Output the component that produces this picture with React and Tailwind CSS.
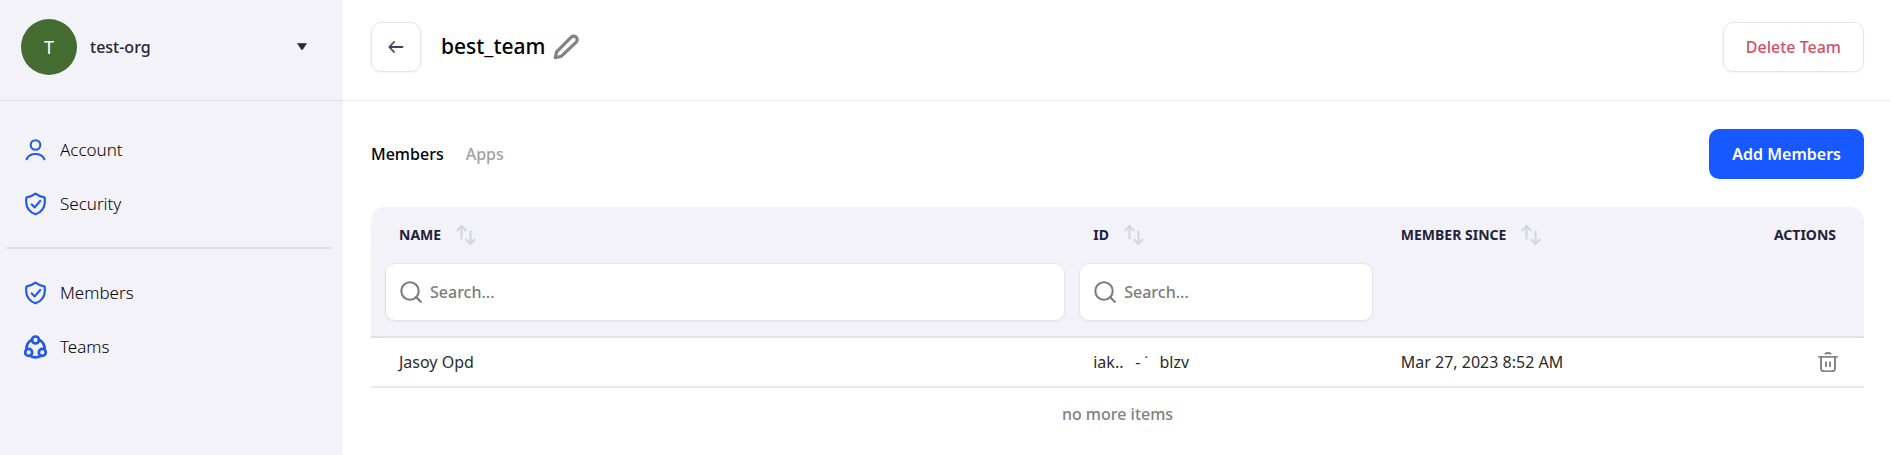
const font = "font-['Noto_Sans','Open_Sans',sans-serif]";

function AccountIcon() {
  return (
    <svg width="24" height="24" viewBox="0 0 24 24" fill="none" stroke="currentColor" strokeWidth="2.100" strokeLinecap="round" aria-hidden="true">
      <circle cx="11.500" cy="7" r="4.800" />
      <path d="M2.600 21.200c1.600-3.600 5-5.200 8.900-5.200s7.300 1.600 8.900 5.200" />
    </svg>
  );
}

function ShieldIcon() {
  return (
    <svg width="24" height="24" viewBox="0 0 24 24" fill="none" stroke="currentColor" strokeWidth="2.200" strokeLinecap="round" strokeLinejoin="round" aria-hidden="true">
      <path d="M11.500 1.700 C9 3.600 6 4.900 2.900 5.400 C2.200 5.600 2 6 2.200 7.200 V10.500 C2.500 16.500 6 20.300 11.500 22.300 C17 20.300 20.500 16.500 20.800 10.500 V7.200 C21 6 20.800 5.600 20.100 5.400 C17 4.900 14 3.600 11.500 1.700 Z" />
      <path d="M7.800 12.400l2.900 3L16.200 9" />
    </svg>
  );
}

function TeamsIcon() {
  return (
    <svg width="24" height="24" viewBox="0 0 24 24" fill="none" stroke="currentColor" strokeWidth="2.700" strokeLinecap="round" aria-hidden="true">
      <circle cx="11.500" cy="5" r="3.500" />
      <circle cx="4.700" cy="17.400" r="3.500" />
      <circle cx="18.300" cy="17.400" r="3.500" />
      <path d="M8 4.600C4.800 6.200 2.500 9.600 2.300 14" />
      <path d="M15 4.600C18.200 6.200 20.500 9.600 20.700 14" />
      <path d="M6 20.900c3.400 1.900 7.600 1.900 11 0" />
    </svg>
  );
}

function PencilIcon() {
  return (
    <svg width="26" height="26" viewBox="0 0 26 26" fill="none" stroke="currentColor" strokeWidth="3.200" strokeLinejoin="round" aria-hidden="true">
      <path d="M2.300 23.700l1.300-5.900L18.200 3.200a3.600 3.600 0 0 1 5 0 3.400 3.400 0 0 1 0 4.900L8.500 22.200z" />
    </svg>
  );
}

function SortIcon() {
  return (
    <svg width="20" height="22" viewBox="0 0 20 22" fill="none" stroke="currentColor" strokeWidth="2.300" strokeLinecap="round" strokeLinejoin="round" aria-hidden="true">
      <path d="M5.500 14.500V2.500M1.500 6.200l4-4.200 4 4.200" />
      <path d="M14.500 7.500V19.500M10.500 15.800l4 4.200 4-4.200" />
    </svg>
  );
}

function SearchIcon() {
  return (
    <svg width="22" height="22" viewBox="0 0 22 22" fill="none" stroke="currentColor" strokeWidth="2.100" strokeLinecap="round" aria-hidden="true">
      <circle cx="10" cy="10" r="8.700" />
      <path d="M16 16l4.800 4.800" />
    </svg>
  );
}

function TrashIcon() {
  return (
    <svg width="20" height="20" viewBox="0 0 20 20" fill="none" stroke="currentColor" strokeWidth="1.900" strokeLinecap="round" strokeLinejoin="round" aria-hidden="true">
      <path d="M1 4.900h18" />
      <path d="M7.500 1.600C9 .8 11 .8 12.500 1.600" />
      <path d="M3 5v11.500c0 1.800 1 2.600 2.600 2.700 3 .2 5.800.2 8.800 0 1.600-.1 2.600-.9 2.600-2.700V5" />
      <path d="M8 10.200v4M12 10.200v4" />
    </svg>
  );
}

function NavItem({ icon, label }) {
  return (
    <a href="#" className="flex h-[54px] items-center gap-3 pl-6 text-[17px] font-light text-black">
      <span className="text-[#2259eb]">{icon}</span>
      {label}
    </a>
  );
}

function SortHeader({ label }) {
  return (
    <div className="flex h-14 items-center gap-[15px] pl-7 uppercase">
      {label}
      <button type="button" aria-label={`Sort by ${label}`} className="text-[#d2d8e0]">
        <SortIcon />
      </button>
    </div>
  );
}

function SearchBox({ label }) {
  return (
    <label className="ml-[14px] flex h-[58px] items-center gap-2 rounded-[10px] border border-[#e6e5ee] bg-white pl-[14px] text-[#7c7c7c] shadow-xs">
      <SearchIcon />
      <input
        type="text"
        aria-label={label}
        placeholder="Search..."
        className="min-w-0 flex-1 bg-transparent text-base font-medium outline-none placeholder:text-[#7c7c7c]"
      />
    </label>
  );
}

export default function App() {
  return (
    <div className={`flex min-h-screen bg-white text-black ${font}`}>
      <aside className="w-[343px] shrink-0 bg-[#f3f2f8]">
        <button type="button" className="flex h-[101px] w-full items-center border-b border-[#e1e0e6] pr-9 pb-[6px] pl-[21px] text-left">
          <span className="flex size-14 items-center justify-center rounded-full bg-[#446c30] text-lg text-white">T</span>
          <span className="ml-[13px] flex-1 text-base font-medium text-[#25253a]">test-org</span>
          <svg width="10" height="8" viewBox="0 0 10 8" fill="#25253a" aria-hidden="true">
            <path d="M.5.5h9L5.500 6.500h-1z" stroke="#25253a" strokeWidth=".6" strokeLinejoin="round" />
          </svg>
        </button>
        <nav aria-label="Settings">
          <div className="pt-[22px] pb-[16px]">
            <NavItem icon={<AccountIcon />} label="Account" />
            <NavItem icon={<ShieldIcon />} label="Security" />
          </div>
          <hr className="mr-3 ml-[6px] border-t-2 border-[#e0dfea]" />
          <div className="pt-[17px]">
            <NavItem icon={<ShieldIcon />} label="Members" />
            <NavItem icon={<TeamsIcon />} label="Teams" />
          </div>
        </nav>
      </aside>

      <main className="min-w-0 flex-1">
        <header className="flex h-[101px] items-center border-b border-[#e9e9eb] pr-[27px] pb-[6px] pl-7">
          <button type="button" aria-label="Back" className="flex size-[50px] items-center justify-center rounded-[10px] border border-[#e6e5ee] text-[#3b4260] shadow-xs">
            <svg width="16" height="12" viewBox="0 0 16 12" fill="none" stroke="currentColor" strokeWidth="1.800" strokeLinecap="round" strokeLinejoin="round" aria-hidden="true">
              <path d="M14.500 6h-13M6 1L1.300 6 6 11" />
            </svg>
          </button>
          <h1 className="ml-5 text-[21px] font-medium">best_team</h1>
          <button type="button" aria-label="Rename team" className="ml-2 text-[#828282]">
            <PencilIcon />
          </button>
          <button type="button" className="ml-auto h-[50px] rounded-[10px] border border-[#e6e5ee] px-[22px] text-base font-medium text-[#d05068] shadow-xs">
            Delete Team
          </button>
        </header>

        <div className="pr-[27px] pl-7">
          <div className="flex h-[106px] items-center">
            <div role="tablist" className="flex gap-[22px] text-base">
              <button type="button" role="tab" aria-selected="true" className="font-medium">Members</button>
              <button type="button" role="tab" aria-selected="false" className="font-medium text-[#a2a2a2]">Apps</button>
            </div>
            <button type="button" className="ml-auto h-[50px] rounded-[10px] bg-[#1859ff] px-[23px] text-base font-semibold text-white">
              Add Members
            </button>
          </div>

          <table className="w-full table-fixed border-separate border-spacing-0 text-left">
            <colgroup>
              <col className="w-[46.5%]" />
              <col className="w-[20.6%]" />
              <col />
              <col className="w-[14%]" />
            </colgroup>
            <thead>
              <tr className="bg-[#f3f2f8] align-top text-sm text-[#22223c]">
                <th className="rounded-tl-[14px] border-b-2 border-[#e1e0e7] p-0 pb-[15px] font-bold">
                  <SortHeader label="Name" />
                  <SearchBox label="Search by name" />
                </th>
                <th className="border-b-2 border-[#e1e0e7] p-0 pb-[15px] font-bold">
                  <SortHeader label="ID" />
                  <SearchBox label="Search by ID" />
                </th>
                <th className="border-b-2 border-[#e1e0e7] p-0 font-bold">
                  <SortHeader label="Member since" />
                </th>
                <th className="rounded-tr-[14px] border-b-2 border-[#e1e0e7] p-0 font-bold">
                  <div className="flex h-14 items-center justify-end pr-7 uppercase">Actions</div>
                </th>
              </tr>
            </thead>
            <tbody>
              <tr className="h-[50px] text-base text-[#2a2a2a]">
                <td className="border-b-2 border-[#e9e9eb] p-0 pl-7">Jasoy Opd</td>
                <td className="border-b-2 border-[#e9e9eb] p-0 pl-7">
                  <span className="inline-flex">
                    <span>iak..</span>
                    <span className="w-9 text-center">- ˙</span>
                    <span>blzv</span>
                  </span>
                </td>
                <td className="border-b-2 border-[#e9e9eb] p-0 pl-7">Mar 27, 2023 8:52 AM</td>
                <td className="border-b-2 border-[#e9e9eb] p-0 pr-[26px]">
                  <button type="button" aria-label="Remove member" className="ml-auto block text-[#828282]">
                    <TrashIcon />
                  </button>
                </td>
              </tr>
            </tbody>
          </table>
          <p className="py-[14px] text-center text-base font-medium text-[#828282]">no more items</p>
        </div>
      </main>
    </div>
  );
}
